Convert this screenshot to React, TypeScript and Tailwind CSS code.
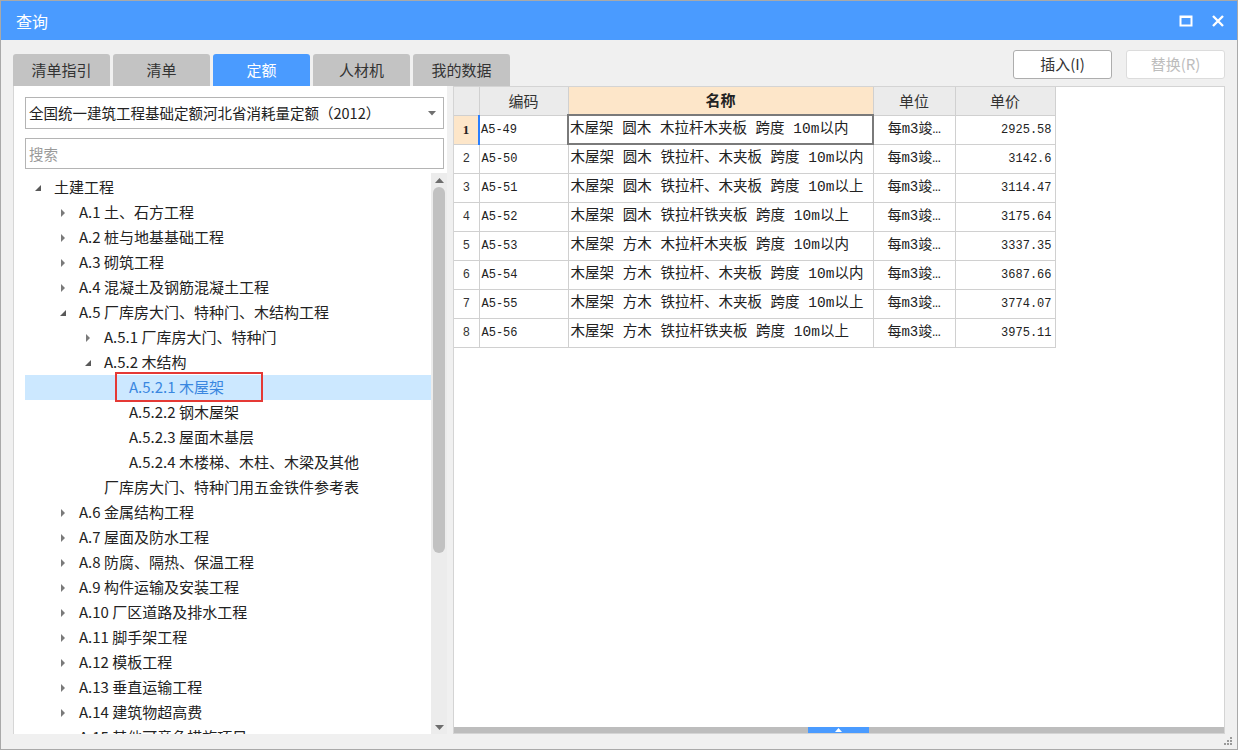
import React from "react";

type Node = { label: string; level: number; arrow: "open" | "closed" | "none"; selected?: boolean };

const tree: Node[] = [
  { label: "土建工程", level: 0, arrow: "open" },
  { label: "A.1 土、石方工程", level: 1, arrow: "closed" },
  { label: "A.2 桩与地基基础工程", level: 1, arrow: "closed" },
  { label: "A.3 砌筑工程", level: 1, arrow: "closed" },
  { label: "A.4 混凝土及钢筋混凝土工程", level: 1, arrow: "closed" },
  { label: "A.5 厂库房大门、特种门、木结构工程", level: 1, arrow: "open" },
  { label: "A.5.1 厂库房大门、特种门", level: 2, arrow: "closed" },
  { label: "A.5.2 木结构", level: 2, arrow: "open" },
  { label: "A.5.2.1 木屋架", level: 3, arrow: "none", selected: true },
  { label: "A.5.2.2 钢木屋架", level: 3, arrow: "none" },
  { label: "A.5.2.3 屋面木基层", level: 3, arrow: "none" },
  { label: "A.5.2.4 木楼梯、木柱、木梁及其他", level: 3, arrow: "none" },
  { label: "厂库房大门、特种门用五金铁件参考表", level: 2, arrow: "none" },
  { label: "A.6 金属结构工程", level: 1, arrow: "closed" },
  { label: "A.7 屋面及防水工程", level: 1, arrow: "closed" },
  { label: "A.8 防腐、隔热、保温工程", level: 1, arrow: "closed" },
  { label: "A.9 构件运输及安装工程", level: 1, arrow: "closed" },
  { label: "A.10 厂区道路及排水工程", level: 1, arrow: "closed" },
  { label: "A.11 脚手架工程", level: 1, arrow: "closed" },
  { label: "A.12 模板工程", level: 1, arrow: "closed" },
  { label: "A.13 垂直运输工程", level: 1, arrow: "closed" },
  { label: "A.14 建筑物超高费", level: 1, arrow: "closed" },
  { label: "A.15 其他可竞争措施项目", level: 1, arrow: "closed" },
];

const rows = [
  ["A5-49", "木屋架 圆木 木拉杆木夹板 跨度 10m以内", "2925.58"],
  ["A5-50", "木屋架 圆木 铁拉杆、木夹板 跨度 10m以内", "3142.6"],
  ["A5-51", "木屋架 圆木 铁拉杆、木夹板 跨度 10m以上", "3114.47"],
  ["A5-52", "木屋架 圆木 铁拉杆铁夹板 跨度 10m以上", "3175.64"],
  ["A5-53", "木屋架 方木 木拉杆木夹板 跨度 10m以内", "3337.35"],
  ["A5-54", "木屋架 方木 铁拉杆、木夹板 跨度 10m以内", "3687.66"],
  ["A5-55", "木屋架 方木 铁拉杆、木夹板 跨度 10m以上", "3774.07"],
  ["A5-56", "木屋架 方木 铁拉杆铁夹板 跨度 10m以上", "3975.11"],
];

const tabs = ["清单指引", "清单", "定额", "人材机", "我的数据"];

function Arrow({ type }: { type: Node["arrow"] }) {
  if (type === "open")
    return (
      <svg width="8" height="8" viewBox="0 0 8 8">
        <polygon points="7,1 7,7 1,7" fill="#595959" />
      </svg>
    );
  if (type === "closed")
    return (
      <svg width="8" height="10" viewBox="0 0 8 10">
        <polygon points="2,1 6,5 2,9" fill="#7a7a7a" />
      </svg>
    );
  return null;
}

export default function App() {
  return (
    <div className="w-[1238px] h-[750px] bg-[#f0f0f0] border border-[#a9a9a9] flex flex-col overflow-hidden font-['Noto_Sans_CJK_SC',sans-serif] text-[#222]">
      {/* Title bar */}
      <div className="h-[39px] bg-[#4a9bff] flex items-center justify-between pl-[15px] pr-[12px] shrink-0">
        <span className="text-white text-[16px]">查询</span>
        <div className="flex items-center gap-[18px]">
          <svg width="14" height="12" viewBox="0 0 14 12">
            <rect x="1.5" y="1.5" width="11" height="9" fill="none" stroke="white" strokeWidth="2" />
            <line x1="1" y1="2" x2="13" y2="2" stroke="white" strokeWidth="2" />
          </svg>
          <svg width="14" height="14" viewBox="0 0 14 14">
            <path d="M2 2 L12 12 M12 2 L2 12" stroke="white" strokeWidth="2.4" />
          </svg>
        </div>
      </div>

      {/* Tabs + buttons */}
      <div className="h-[46px] flex justify-between pl-[12px] pr-[12px] shrink-0">
        <div className="flex gap-[3px] items-end">
          {tabs.map((t) => (
            <div
              key={t}
              className={
                t === "定额"
                  ? "w-[97px] h-[32px] rounded-t-[3px] bg-[#4a9bff] text-white text-[15px] flex items-center justify-center"
                  : "w-[97px] h-[32px] rounded-t-[3px] bg-[#c3c3c3] text-[#333] text-[15px] flex items-center justify-center"
              }
            >
              {t}
            </div>
          ))}
        </div>
        <div className="flex gap-[14px] pt-[10px]">
          <button className="w-[99px] h-[29px] bg-white border border-[#adadad] rounded-[3px] text-[15px] text-[#333]">
            插入(I)
          </button>
          <button className="w-[99px] h-[29px] bg-white border border-[#dcdcdc] rounded-[3px] text-[15px] text-[#bdbdbd]">
            替换(R)
          </button>
        </div>
      </div>

      {/* Main content */}
      <div className="flex-1 flex gap-[6px] pl-[12px] pr-[12px] min-h-0">
        {/* Left panel */}
        <div className="w-[434px] bg-white border-l border-[#d6d6d6] flex flex-col min-h-0">
          <div className="pl-[11px] pr-[3px] pt-[11px] flex flex-col gap-[9px]">
            <div className="h-[32px] border border-[#b4b4b4] flex items-center justify-between pl-[3px] pr-[7px]">
              <span className="text-[14.5px] text-[#222]">全国统一建筑工程基础定额河北省消耗量定额（2012）</span>
              <svg width="8" height="5" viewBox="0 0 8 5">
                <polygon points="0,0 8,0 4,4.5" fill="#707070" />
              </svg>
            </div>
            <div className="h-[31px] border border-[#b4b4b4] flex items-center pl-[3px]">
              <span className="text-[14.5px] text-[#9a9a9a]">搜索</span>
            </div>
          </div>
          <div className="flex-1 flex min-h-0 pl-[11px] pt-[4px]">
            <div className="flex-1 overflow-hidden pt-[2px]">
              {tree.map((n) => (
                <div
                  key={n.label}
                  className={
                    n.selected
                      ? "relative h-[25px] flex items-center bg-[#cce8ff] text-[#3a87e0]"
                      : "relative h-[25px] flex items-center text-[#222]"
                  }
                >
                  <div style={{ width: 24 + n.level * 25 }} className="flex justify-end shrink-0 pr-[7px]">
                    <Arrow type={n.arrow} />
                  </div>
                  <span className="text-[15px] whitespace-nowrap pl-[5px]">{n.label}</span>
                  {n.selected && (
                    <div className="absolute left-[90px] top-[-3px] w-[148px] h-[30px] border-2 border-[#e53935]" />
                  )}
                </div>
              ))}
            </div>
            {/* Scrollbar */}
            <div className="w-[16px] bg-[#ececec] flex flex-col items-center shrink-0">
              <div className="h-[14px] flex items-center justify-center">
                <svg width="9" height="5" viewBox="0 0 9 5">
                  <polygon points="0,5 9,5 4.5,0" fill="#6d6d6d" />
                </svg>
              </div>
              <div className="w-[12px] h-[366px] rounded-full bg-[#c1c1c1]" />
              <div className="flex-1" />
              <div className="h-[14px] flex items-center justify-center">
                <svg width="9" height="5" viewBox="0 0 9 5">
                  <polygon points="0,0 9,0 4.5,5" fill="#6d6d6d" />
                </svg>
              </div>
            </div>
          </div>
        </div>

        {/* Right panel */}
        <div className="flex-1 bg-white border border-[#d4d4d4] flex flex-col min-h-0">
          <div className="flex-1">
            <table className="border-collapse text-[15px]">
              <thead>
                <tr className="h-[28px]">
                  <th className="w-[25px] bg-[#ebebeb] border border-[#d0d0d0] border-l-0 border-t-0"></th>
                  <th className="w-[89px] bg-[#ebebeb] border border-[#d0d0d0] border-t-0 font-normal text-[#333]">编码</th>
                  <th className="w-[305px] bg-[#fde6c9] border border-[#d0d0d0] border-t-0 font-bold text-[#222]">名称</th>
                  <th className="w-[82px] bg-[#ebebeb] border border-[#d0d0d0] border-t-0 font-normal text-[#333]">单位</th>
                  <th className="w-[100px] bg-[#ebebeb] border border-[#d0d0d0] border-t-0 font-normal text-[#333]">单价</th>
                </tr>
              </thead>
              <tbody>
                {rows.map((r, i) => (
                  <tr key={r[0]} className="h-[29px]">
                    <td
                      className={
                        i === 0
                          ? "border border-[#d0d0d0] border-l-0 bg-[#fde6c9] text-center font-bold text-[13px] font-['Liberation_Serif',serif]"
                          : "border border-[#d0d0d0] border-l-0 text-center text-[12px] text-[#333] font-['Liberation_Mono',monospace]"
                      }
                    >
                      {i + 1}
                    </td>
                    <td
                      className={
                        i === 0
                          ? "border border-[#d0d0d0] border-l-2 border-l-[#2a7fff] pl-[1px] text-[12px] font-['Liberation_Mono','Noto_Sans_CJK_SC',monospace]"
                          : "border border-[#d0d0d0] pl-[2px] text-[12px] font-['Liberation_Mono','Noto_Sans_CJK_SC',monospace]"
                      }
                    >
                      {r[0]}
                    </td>
                    <td
                      className={
                        i === 0
                          ? "border-2 border-[#7a7a7a] pl-[1px] whitespace-nowrap font-['Liberation_Mono','Noto_Sans_CJK_SC',monospace] text-[14.5px]"
                          : "border border-[#d0d0d0] pl-[2px] whitespace-nowrap font-['Liberation_Mono','Noto_Sans_CJK_SC',monospace] text-[14.5px]"
                      }
                    >
                      {r[1]}
                    </td>
                    <td className="border border-[#d0d0d0] text-center whitespace-nowrap font-['Liberation_Mono','Noto_Sans_CJK_SC',monospace] text-[14px]">
                      每m3竣…
                    </td>
                    <td className="border border-[#d0d0d0] text-right pr-[3px] text-[12px] font-['Liberation_Mono',monospace]">
                      {r[2]}
                    </td>
                  </tr>
                ))}
              </tbody>
            </table>
          </div>
          {/* Horizontal scrollbar */}
          <div className="h-[6px] bg-[#bdbdbd] flex shrink-0">
            <div className="w-[354px]" />
            <div className="w-[61px] bg-[#4a9bff] flex items-center justify-center">
              <svg width="7" height="4" viewBox="0 0 7 4">
                <polygon points="0,4 7,4 3.5,0" fill="white" />
              </svg>
            </div>
          </div>
        </div>
      </div>

      {/* Footer with resize grip */}
      <div className="h-[15px] flex justify-end items-end pr-[4px] pb-[3px] shrink-0">
        <svg width="9" height="9" viewBox="0 0 9 9">
          <rect x="6" y="0" width="2" height="2" fill="#9a9a9a" />
          <rect x="3" y="3" width="2" height="2" fill="#9a9a9a" />
          <rect x="6" y="3" width="2" height="2" fill="#9a9a9a" />
          <rect x="0" y="6" width="2" height="2" fill="#9a9a9a" />
          <rect x="3" y="6" width="2" height="2" fill="#9a9a9a" />
          <rect x="6" y="6" width="2" height="2" fill="#9a9a9a" />
        </svg>
      </div>
    </div>
  );
}
